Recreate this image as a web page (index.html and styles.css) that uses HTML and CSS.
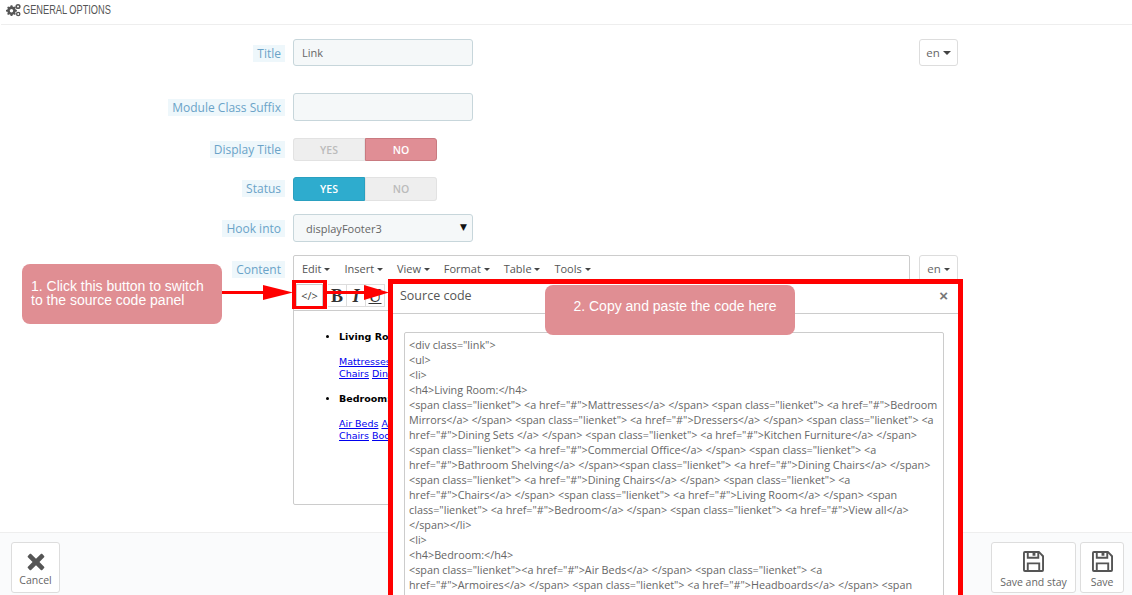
FILE: index.html
```html
<!DOCTYPE html>
<html lang="en">
<head>
<meta charset="utf-8">
<title>General options</title>
<link rel="stylesheet" href="styles.css">
</head>
<body>
<div class="page">
  <header class="panel-head">
    <svg class="cogs" viewBox="0 0 16 14" width="16" height="14"><g fill="#555"><path d="M6 2.200l1.300.1.400 1.300 1 .5 1.200-.6.900.9-.6 1.200.4 1 1.300.5v1.300l-1.300.4-.4 1 .6 1.200-.9.900-1.200-.6-1 .4-.4 1.300H5.700l-.4-1.300-1-.4-1.200.6-.9-.9.6-1.200-.4-1L1 8.400V7.100l1.400-.5.4-1-.6-1.200.9-.9 1.200.6 1-.5.4-1.300z"/><circle cx="13" cy="3.500" r="2.600"/><circle cx="13.200" cy="11" r="2.300"/></g><circle cx="6.500" cy="7.800" r="1.700" fill="#fff"/><circle cx="13" cy="3.500" r="1" fill="#fff"/><circle cx="13.200" cy="11" r=".9" fill="#fff"/></svg>
    <span class="panel-title">GENERAL OPTIONS</span>
  </header>

  <main class="form">
    <div class="row row-title">
      <div class="label"><span>Title</span></div>
      <div class="field"><div class="input">Link</div></div>
      <div class="lang">en <i class="caret caret-lg"></i></div>
    </div>
    <div class="row row-suffix">
      <div class="label"><span>Module Class Suffix</span></div>
      <div class="field"><div class="input"></div></div>
    </div>
    <div class="row row-display">
      <div class="label"><span>Display Title</span></div>
      <div class="toggle toggle-short"><span class="opt">YES</span><span class="opt opt-no">NO</span></div>
    </div>
    <div class="row row-status">
      <div class="label"><span>Status</span></div>
      <div class="toggle"><span class="opt opt-yes">YES</span><span class="opt">NO</span></div>
    </div>
    <div class="row row-hook">
      <div class="label"><span>Hook into</span></div>
      <div class="field"><div class="input select">displayFooter3<b class="select-arrow">▼</b></div></div>
    </div>
    <div class="row">
      <div class="label"><span>Content</span></div>
      <div class="editor">
        <nav class="menubar">
          <span>Edit <i class="caret"></i></span>
          <span>Insert <i class="caret"></i></span>
          <span>View <i class="caret"></i></span>
          <span>Format <i class="caret"></i></span>
          <span>Table <i class="caret"></i></span>
          <span>Tools <i class="caret"></i></span>
        </nav>
        <div class="toolbar">
          <span class="tool tool-code">&lt;/&gt;</span>
          <span class="tool tool-b">B</span>
          <span class="tool tool-i">I</span>
          <span class="tool tool-u">U</span>
        </div>
        <div class="editor-body">
          <ul>
            <li>
              <h4>Living Room:</h4>
              <p><a href="#">Mattresses</a><br><a href="#">Chairs</a> <a href="#">Dining</a></p>
            </li>
            <li>
              <h4>Bedroom:</h4>
              <p><a href="#">Air Beds</a> <a href="#">Armoires</a><br><a href="#">Chairs</a> <a href="#">Bookcases</a></p>
            </li>
          </ul>
        </div>
      </div>
      <div class="lang">en <i class="caret"></i></div>
    </div>
  </main>

  <footer class="footer">
    <a class="action action-cancel">
      <svg viewBox="0 0 20 20" width="18" height="18"><path fill="#555" d="M4.600 1.200L10 6.400l5.400-5.200c.5-.5 1.100-.5 1.600 0l2 2c.5.500.5 1.100 0 1.600L13.800 10l5.200 5.200c.5.5.5 1.100 0 1.600l-2 2c-.5.5-1.100.5-1.600 0L10 13.600l-5.400 5.200c-.5.5-1.100.5-1.600 0l-2-2c-.5-.5-.5-1.100 0-1.600L6.200 10 1 4.800c-.5-.5-.5-1.100 0-1.600l2-2c.5-.5 1.100-.5 1.600 0z"/></svg>
      <span>Cancel</span>
    </a>
    <a class="action action-stay">
      <svg viewBox="0 0 22 22" width="21" height="21"><path fill="#555" fill-rule="evenodd" d="M2 0h15l5 5v15a2 2 0 0 1-2 2H2a2 2 0 0 1-2-2V2a2 2 0 0 1 2-2zm0 2v18h2v-8h14v8h2V6l-3-3.500V8H4V2zm4 0v4h9V2h-2v3h-3V2zm0 12v6h10v-6z"/></svg>
      <span>Save and stay</span>
    </a>
    <a class="action action-save">
      <svg viewBox="0 0 22 22" width="21" height="21"><path fill="#555" fill-rule="evenodd" d="M2 0h15l5 5v15a2 2 0 0 1-2 2H2a2 2 0 0 1-2-2V2a2 2 0 0 1 2-2zm0 2v18h2v-8h14v8h2V6l-3-3.500V8H4V2zm4 0v4h9V2h-2v3h-3V2zm0 12v6h10v-6z"/></svg>
      <span>Save</span>
    </a>
  </footer>

  <section class="modal">
    <div class="modal-head"><span>Source code</span><b class="modal-close">×</b></div>
    <div class="modal-body">
      <div class="code">&lt;div class="link"&gt;
&lt;ul&gt;
&lt;li&gt;
&lt;h4&gt;Living Room:&lt;/h4&gt;
&lt;span class="lienket"&gt; &lt;a href="#"&gt;Mattresses&lt;/a&gt; &lt;/span&gt; &lt;span class="lienket"&gt; &lt;a href="#"&gt;Bedroom
Mirrors&lt;/a&gt; &lt;/span&gt; &lt;span class="lienket"&gt; &lt;a href="#"&gt;Dressers&lt;/a&gt; &lt;/span&gt; &lt;span class="lienket"&gt; &lt;a
href="#"&gt;Dining Sets &lt;/a&gt; &lt;/span&gt; &lt;span class="lienket"&gt; &lt;a href="#"&gt;Kitchen Furniture&lt;/a&gt; &lt;/span&gt;
&lt;span class="lienket"&gt; &lt;a href="#"&gt;Commercial Office&lt;/a&gt; &lt;/span&gt; &lt;span class="lienket"&gt; &lt;a
href="#"&gt;Bathroom Shelving&lt;/a&gt; &lt;/span&gt;&lt;span class="lienket"&gt; &lt;a href="#"&gt;Dining Chairs&lt;/a&gt; &lt;/span&gt;
&lt;span class="lienket"&gt; &lt;a href="#"&gt;Dining Chairs&lt;/a&gt; &lt;/span&gt; &lt;span class="lienket"&gt; &lt;a
href="#"&gt;Chairs&lt;/a&gt; &lt;/span&gt; &lt;span class="lienket"&gt; &lt;a href="#"&gt;Living Room&lt;/a&gt; &lt;/span&gt; &lt;span
class="lienket"&gt; &lt;a href="#"&gt;Bedroom&lt;/a&gt; &lt;/span&gt; &lt;span class="lienket"&gt; &lt;a href="#"&gt;View all&lt;/a&gt;
&lt;/span&gt;&lt;/li&gt;
&lt;li&gt;
&lt;h4&gt;Bedroom:&lt;/h4&gt;
&lt;span class="lienket"&gt;&lt;a href="#"&gt;Air Beds&lt;/a&gt; &lt;/span&gt; &lt;span class="lienket"&gt; &lt;a
href="#"&gt;Armoires&lt;/a&gt; &lt;/span&gt; &lt;span class="lienket"&gt; &lt;a href="#"&gt;Headboards&lt;/a&gt; &lt;/span&gt; &lt;span</div>
    </div>
  </section>

  <div class="highlight"></div>
  <svg class="arrows" viewBox="0 0 400 30" width="400" height="30"><g fill="#f00"><rect x="0" y="10" width="45" height="3"/><path d="M43 4l30 7.500-30 7.500z"/><rect x="107" y="10" width="40" height="3"/><path d="M144 4l25 7.500-25 7.500z"/></g></svg>
  <div class="note note-one">1. Click this button to switch<br>to the source code panel</div>
  <div class="note note-two">2. Copy and paste the code here</div>
</div>
</body>
</html>
```
FILE: styles.css
```css
* { box-sizing: border-box; }
html, body { margin: 0; padding: 0; }
body { background: #fff; font-family: "Open Sans", sans-serif; font-size: 12px; color: #666; }

.page { position: relative; width: 1132px; height: 595px; overflow: hidden; display: flex; flex-direction: column; }

.panel-head { height: 25px; flex: none; margin-left: 1px; padding: 0 0 5px 4px; border-bottom: 1px solid #eee; display: flex; align-items: center; gap: 2px; }
.panel-title { font-family: "Liberation Sans", sans-serif; font-size: 13px; color: #555; white-space: nowrap; transform: scaleX(.71); transform-origin: left center; }

.form { flex: 1; padding-top: 14px; }
.row { display: grid; grid-template-columns: 285px 618px 39px; column-gap: 8px; align-items: start; }
.row-title { margin-bottom: 27px; }
.row-suffix { margin-bottom: 17px; }
.row-display { margin-bottom: 16px; }
.row-status { margin-bottom: 13px; }
.row-hook { margin-bottom: 13px; }

.label { text-align: right; font-size: 12px; line-height: 17px; color: #6aa3c8; padding-top: 6px; }
.label span { background: #eef7fb; padding: 0 4px; display: inline-block; }
.row-display .label, .row-status .label { padding-top: 3px; }
.field { width: 180px; }
.row-suffix .input { height: 28px; }

.input { height: 27px; background: #f5f8f9; border: 1px solid #c7d6db; border-radius: 3px; padding: 0 8px; line-height: 25px; font-size: 11px; color: #666; }
.select { height: 28px; line-height: 28px; position: relative; padding-left: 12px; }
.select-arrow { position: absolute; right: 5px; top: -2px; font-size: 9px; color: #111; font-family: "DejaVu Sans", sans-serif; }

.lang { width: 39px; height: 27px; border: 1px solid #ddd; border-radius: 3px; background: #fff; text-align: center; line-height: 26px; font-size: 11.500px; color: #666; white-space: nowrap; }

.caret { display: inline-block; width: 0; height: 0; border-left: 3px solid transparent; border-right: 3px solid transparent; border-top: 3px solid #444; vertical-align: 2px; }
.caret-lg { border-left-width: 4px; border-right-width: 4px; border-top-width: 4px; }

.toggle { display: flex; width: 144px; height: 24px; background: #eee; border-radius: 3px; }
.toggle-short { height: 23px; }
.opt { flex: 1; text-align: center; font-size: 10.500px; font-weight: 600; line-height: 22px; color: #bbb; border: 1px solid #e2e2e2; }
.opt:first-child { border-radius: 3px 0 0 3px; }
.opt:last-child { border-radius: 0 3px 3px 0; }
.opt-no { background: #e08e95; border-color: #c97a80; color: #fff; }
.opt-yes { background: #2eacce; border-color: #2aa0c0; color: #fff; }

.editor { width: 617px; height: 250px; border: 1px solid #ccc; border-radius: 2px; background: #fff; display: flex; flex-direction: column; }
.menubar { height: 25px; display: flex; align-items: center; gap: 14px; padding-left: 8px; font-size: 11px; color: #555; flex: none; }
.toolbar { height: 30px; flex: none; display: flex; align-items: center; padding-left: 2px; border-bottom: 1px solid #ccc; }
.tool { height: 23px; width: 19px; border: 1px solid #ddd; border-left: none; text-align: center; line-height: 22px; font-family: "Liberation Serif", serif; font-size: 18px; color: #333; }
.tool-code { width: 27px; margin-right: 5px; border: 1px solid #ccc; font-family: "Open Sans", sans-serif; font-size: 11px; color: #444; background: #fff; }
.tool-b { font-weight: 700; }
.tool-i { font-style: italic; font-weight: 700; }
.tool-u { text-decoration: underline; }

.editor-body { flex: 1; overflow: hidden; font-family: "DejaVu Sans", sans-serif; font-size: 9.500px; line-height: 12px; color: #000; }
.editor-body ul { margin: 20px 0 0; padding: 0 0 0 45px; }
.editor-body li { margin: 0 0 13px; }
.editor-body h4 { margin: 0 0 13px; font-size: 9.500px; line-height: 12px; font-weight: 700; }
.editor-body p { margin: 0; white-space: nowrap; }
.editor-body a { color: #00e; }

.footer { flex: none; height: 63px; background: #fafbfc; border-top: 1px solid #eee; display: flex; align-items: flex-start; gap: 4px; padding: 9px 8px 0 11px; }
.action { height: 51px; border: 1px solid #ddd; border-radius: 3px; background: #fff; display: flex; flex-direction: column; align-items: center; justify-content: flex-start; font-size: 10.500px; line-height: 14px; color: #666; padding-top: 8px; white-space: nowrap; }
.action span { margin-top: 3px; }
.action-cancel { width: 49px; margin-right: auto; padding-top: 10px; }
.action-cancel span { margin-top: 2px; }
.action-stay { width: 85px; }
.action-save { width: 44px; }

.modal { position: absolute; left: 388px; top: 279px; width: 575px; height: 400px; border: 5px solid #f00; background: #fff; }
.modal-head { height: 30px; border-bottom: 1px solid #ccc; display: flex; align-items: center; justify-content: space-between; padding: 0 10px 7px 7px; font-size: 12.500px; color: #555; }
.modal-close { font-size: 15px; color: #777; font-family: "Liberation Sans", sans-serif; }
.modal-body { padding: 18px 14px 0 11px; }
.code { border: 1px solid #ccc; border-radius: 2px; height: 300px; padding: 4px 4px 0 4px; font-size: 10.800px; line-height: 15px; color: #666; white-space: pre; overflow: hidden; }

.highlight { position: absolute; left: 292px; top: 280px; width: 35px; height: 29px; border: solid #f00; border-width: 3px 4px; }
.arrows { position: absolute; left: 220px; top: 281px; }

.note { position: absolute; background: #e08e93; color: #fff; font-family: "Liberation Sans", sans-serif; font-size: 14px; border-radius: 8px; }
.note-one { left: 22px; top: 264px; width: 200px; height: 60px; padding: 15px 0 0 9px; line-height: 14px; }
.note-two { left: 545px; top: 285px; width: 250px; height: 50px; padding-left: 10px; line-height: 42px; text-align: center; }
```
